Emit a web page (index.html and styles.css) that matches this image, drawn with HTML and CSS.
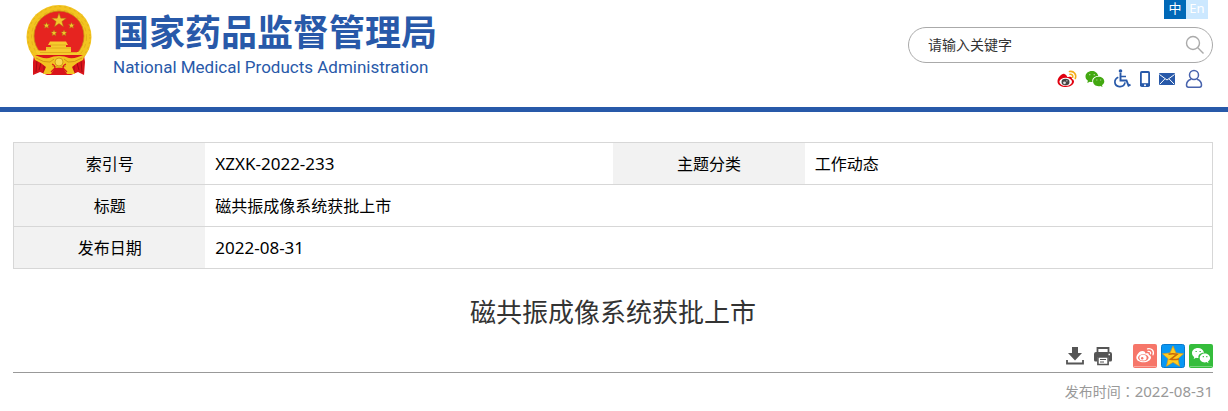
FILE: index.html
```html
<!DOCTYPE html>
<html lang="zh-CN">
<head>
<meta charset="utf-8">
<title>磁共振成像系统获批上市</title>
<link rel="stylesheet" href="styles.css">
</head>
<body>
<header class="header">
  <a class="brand" href="#">
    <svg class="emblem" viewBox="0 0 66 70" aria-hidden="true">
      <ellipse cx="33" cy="32" rx="32.500" ry="32" fill="#f2c420"/>
      <ellipse cx="33" cy="32" rx="31" ry="30.500" fill="none" stroke="#e3ad1a" stroke-width="1" stroke-dasharray="2 3"/>
      <ellipse cx="33" cy="32" rx="27.500" ry="27" fill="none" stroke="#e6b01b" stroke-width="1" stroke-dasharray="4 3"/>
      <circle cx="33" cy="31" r="25" fill="#e62420" stroke="#c98a12" stroke-width=".8"/>
      <path d="M8 50H58L59 57 58 70 52 67 45 70H21L14 67 7 70 7 57Z" fill="#d9141b"/>
      <path d="M11 56 10 67M15 58 13 65M18 60 18 68M55 56 56 67M51 58 53 65M48 60 48 68" stroke="#a40c14" stroke-width="1"/>
      <g fill="#f4c62c" stroke="#a96f12" stroke-width=".5">
        <path d="m33 8 1.800 5.200h5.500l-4.400 3.300 1.600 5.200-4.500-3.100-4.500 3.100 1.600-5.200-4.400-3.300h5.500z"/>
        <path d="m20.500 17.500.9 1.900 2.100.2-1.600 1.400.5 2.200-1.900-1.100-1.900 1.100.5-2.200-1.600-1.400 2.100-.2zM45.500 17.500l.9 1.900 2.100.2-1.600 1.400.5 2.200-1.900-1.100-1.900 1.100.5-2.200-1.600-1.400 2.100-.2zM28 25l.9 1.900 2.100.2-1.600 1.400.5 2.200-1.900-1.100-1.900 1.100.5-2.200-1.600-1.400 2.100-.2zM38 25l.9 1.900 2.100.2-1.600 1.400.5 2.200-1.900-1.100-1.900 1.100.5-2.200-1.600-1.400 2.100-.2z"/>
      </g>
      <path d="M24 36.500H40L42 40H40V42H44V43H24V42H25V40H22ZM20 42H45V47H54L52 50H12L9 45.500H20Z" fill="#f6ca2d"/>
      <path d="M24 40H40M20 43H45M14 47.500H51" stroke="#dda51a" stroke-width=".8"/>
      <path d="M14 51H52L45 54H21Z" fill="#dc171c"/>
      <path d="M7 49Q16 54 23 53Q27 51 33 51Q39 51 43 53Q50 54 59 49L57 55Q50 58 46 62L49 69H41L37 63H29L25 69H17L20 62Q16 58 9 55Z" fill="#f3c220"/>
      <path d="M10 53Q18 58 24 57L28 54M56 53Q48 58 42 57L38 54M26 61Q33 64 40 61" fill="none" stroke="#c98a12" stroke-width=".8"/>
      <path d="M26 59Q29 60 29 63L25 67M40 59Q37 60 37 63L41 67" fill="none" stroke="#d9141b" stroke-width="1.200"/>
      <circle cx="33" cy="57" r="4" fill="#f8d84e" stroke="#c98a12" stroke-width=".8"/>
      <path d="M28 65Q33 61 38 65L40 69H26Z" fill="#d9141b"/>
    </svg>
    <span class="brand-text">
      <span class="brand-name">国家药品监督管理局</span>
      <span class="brand-en">National Medical Products Administration</span>
    </span>
  </a>
  <div class="tools">
    <nav class="langs" aria-label="语言"><a class="lang lang-on" href="#">中</a><a class="lang" href="#">En</a></nav>
    <form class="search">
      <input class="search-input" type="text" placeholder="请输入关键字" aria-label="请输入关键字">
      <button class="search-button" type="button" aria-label="搜索">
        <svg width="20" height="20" viewBox="0 0 20 20" fill="none" stroke="#aaa" stroke-width="1.400"><circle cx="8" cy="8" r="6.500"/><path d="m12.800 12.800 5.700 5.700"/></svg>
      </button>
    </form>
    <nav class="links" aria-label="快捷入口">
      <a href="#" aria-label="微博"><svg width="20" height="18" viewBox="0 0 20 18">
        <path d="M7.500 4C5 3 .8 7.500.5 11c-.3 4 4 6 8.500 6s8-2.500 8-5.400c0-1.600-1-2.400-2.200-2.700.6-1.600-.2-2.900-3.600-1.900C9.800 7.400 10 5 7.500 4Z" fill="#e0000f"/>
        <ellipse cx="8.700" cy="11.800" rx="6.300" ry="4" fill="#fff"/><ellipse cx="8.500" cy="12" rx="4" ry="3.200" fill="#444"/><circle cx="7.500" cy="12.800" r="1.400" fill="#ddd"/><circle cx="9.900" cy="10.800" r=".6" fill="#fff"/>
        <path d="M12.500 1.500C17 .7 19.800 4.500 18.300 8.500M13 4.300c2-.2 3.200 1.200 2.700 3" fill="none" stroke="#f3ad19" stroke-width="1.600" stroke-linecap="round"/></svg></a>
      <a href="#" aria-label="微信"><svg width="20" height="18" viewBox="0 0 20 18"><path d="M7 1C3.200 1 .5 3.400.5 6.500c0 1.800.9 3.200 2.400 4.200L2.300 13l2.500-1.300c.9.200 1.700.3 2.600.2C6.500 8.500 9.500 6 13.300 6 12.700 3 10 1 7 1Z" fill="#43a811"/><path d="M13.600 6.800c-3.200 0-5.500 2-5.500 4.700s2.300 4.700 5.500 4.700c.7 0 1.300-.1 1.900-.3l2 1.100-.5-1.900c1.400-.8 2.300-2.200 2.300-3.600 0-2.700-2.600-4.700-5.700-4.700Z" fill="#43a811"/><path d="M4 4.600h1.400M8.600 4.600H10M11.200 10h1.200M15 10h1.200" stroke="#a5d68c" stroke-width="1.200"/></svg></a>
      <a href="#" aria-label="无障碍"><svg width="18" height="19" viewBox="0 0 18 19" fill="none" stroke="#2859a9" stroke-width="1.700"><circle cx="7.500" cy="2" r="1.800" fill="#2859a9" stroke="none"/><path d="M7.500 4v7.500h6l2 5.200 2-1" stroke-width="1.900"/><path d="M7.500 7.500h5.500M5.300 8.200C.5 10.200.7 17 6.300 17.600c3 .3 5.200-1.500 5.800-4.200"/></svg></a>
      <a href="#" aria-label="移动版"><svg width="12" height="18" viewBox="0 0 12 18"><rect x="1" y="1" width="10" height="16" rx="1.800" fill="#2859a9"/><path d="M2.800 3h6.400v10.200H2.800Z" fill="#fff"/><circle cx="6" cy="15.200" r="1" fill="#fff"/></svg></a>
      <a href="#" aria-label="邮箱"><svg width="16" height="12" viewBox="0 0 16 12"><rect width="16" height="12" rx="1" fill="#2859a9"/><path d="m.5 1.500 7.500 5.500 7.500-5.500M1 11l4.800-5M15 11l-4.800-5" fill="none" stroke="#fff" stroke-width="1"/></svg></a>
      <a class="user-link" href="#" aria-label="用户"><svg width="16" height="18" viewBox="0 0 16 18" fill="none" stroke="#4863ad" stroke-width="1.500"><circle cx="8" cy="5" r="4.500"/><path d="M5 9.200C2 10.300.5 12.500.5 15c0 1.600.8 2.200 2 2.200h11c1.200 0 2-.6 2-2.200 0-2.500-1.500-4.700-4.500-5.800"/></svg></a>
    </nav>
  </div>
</header>
<main class="content">
  <table class="info">
    <tr><th scope="row">索引号</th><td class="latin">XZXK-2022-233</td><th scope="row">主题分类</th><td>工作动态</td></tr>
    <tr><th scope="row">标题</th><td colspan="3">磁共振成像系统获批上市</td></tr>
    <tr><th scope="row">发布日期</th><td class="latin" colspan="3">2022-08-31</td></tr>
  </table>
  <h1 class="title">磁共振成像系统获批上市</h1>
  <div class="actions">
    <button class="action" type="button" aria-label="下载"><svg width="20" height="20" viewBox="0 0 20 20"><path d="M7 1h6v6h4l-7 7.500L3 7h4Z" fill="#555"/><path d="M2 14v3.500h16V14" fill="none" stroke="#555" stroke-width="1.800"/></svg></button>
    <button class="action" type="button" aria-label="打印"><svg width="20" height="20" viewBox="0 0 20 20"><path d="M4.500 6V2h11v4" fill="none" stroke="#555" stroke-width="1.800"/><path d="M3 6h14q2 0 2 2v6q0 1.500-1.500 1.500H16V11H4v4.500H2.500Q1 15.500 1 14V8q0-2 2-2Z" fill="#555"/><path d="M4.900 11h10.200v7.500H4.900Z" fill="#fff" stroke="#555" stroke-width="1.600"/><path d="M7 13.500h6M7 16h4" stroke="#555" stroke-width="1.200"/><path d="M15.500 8.500h1.500" stroke="#fff" stroke-width="1.300"/></svg></button>
    <span class="shares">
      <a href="#" aria-label="分享到微博"><svg width="24" height="24" viewBox="0 0 24 24"><rect width="24" height="24" rx="2" fill="#f67669"/><path d="M1 22.500h22" stroke="#faa69d"/><path d="M9.500 7C7 6.500 3.500 10.500 3.300 13.500c-.1 3.200 3.500 4.800 7.200 4.800 4 0 7.500-2.200 7.500-4.800 0-1.500-1.100-2.200-2.200-2.500.5-1.800-1-2.300-3.500-1.500C12.500 8 11.500 7.200 9.500 7Z" fill="#fff"/><ellipse cx="10.300" cy="13.700" rx="5.300" ry="3.500" fill="#f67669"/><ellipse cx="10" cy="13.700" rx="3.600" ry="2.900" fill="#fff"/><circle cx="9.200" cy="14.300" r="1.200" fill="#f67669"/><path d="M14.500 4.800c4-.8 7 2 5.500 6M15 7.300c2-.2 3 1 2.500 2.500" fill="none" stroke="#fff" stroke-width="1.300" stroke-linecap="round"/></svg></a>
      <a href="#" aria-label="分享到QQ空间"><svg width="24" height="24" viewBox="0 0 24 24"><rect x=".5" y=".5" width="23" height="23" rx="2" fill="#0997f3" stroke="#0878cc"/><path d="m12 2 3 7 7.500.8-5.700 5 1.700 7.400L12 18.300l-6.500 3.900 1.700-7.400-5.700-5L9 9Z" fill="#ffcd20" stroke="#e19a12" stroke-width=".7"/><path d="M7.500 10.300c3-.7 5.500-.7 8.500 0l-6.500 5c3 .5 5 .4 8.500-.3" fill="none" stroke="#c76708" stroke-width="1.500"/></svg></a>
      <a href="#" aria-label="分享到微信"><svg width="24" height="24" viewBox="0 0 24 24"><rect width="24" height="24" rx="2" fill="#35bd3c"/><path d="M1 22.500h22" stroke="#79d47e"/><path d="M9 4C5.500 4 3 6.200 3 9c0 1.600.8 3 2.200 3.900L4.700 15 7 13.800c.8.200 1.600.3 2.500.2C8.700 11 11.500 8.500 15 8.700 14.400 6 12 4 9 4Z" fill="#fff"/><path d="M15.800 9.600c-2.900 0-5.100 2-5.100 4.400s2.200 4.400 5.100 4.400c.6 0 1.200-.1 1.800-.3l1.900 1.100-.5-1.800c1.300-.8 2.100-2 2.100-3.400 0-2.500-2.500-4.400-5.300-4.400Z" fill="#fff"/><path d="M6.500 7.500h1.300M10.500 7.500h1.300M13.700 12.600h1.200M17.200 12.600h1.200" stroke="#35bd3c" stroke-width="1.200"/></svg></a>
    </span>
  </div>
  <p class="published">发布时间<span class="colon" lang="zh-TW">：</span><time class="published-date" datetime="2022-08-31">2022-08-31</time></p>
</main>
</body>
</html>
```
FILE: styles.css
```css
* { box-sizing: border-box; }
body {
  margin: 0;
  background: #fff;
  color: #000;
  font: 16px/24px "Noto Sans", "Noto Sans CJK SC", sans-serif;
}
a { color: inherit; text-decoration: none; }
svg { display: block; overflow: visible; }
button { border: 0; padding: 0; background: none; cursor: pointer; }

.header {
  display: flex;
  justify-content: space-between;
  align-items: flex-start;
  height: 112px;
  padding: 0 15px 0 26px;
  border-bottom: 5px solid #2859a9;
}
.brand { display: flex; gap: 21px; padding-top: 5px; color: #2859a9; }
.emblem { width: 66px; height: 70px; }
.brand-text { display: flex; flex-direction: column; padding-top: 5px; white-space: nowrap; }
.brand-name { font: bold 36px/40px "Noto Sans CJK SC", sans-serif; }
.brand-en { font: 17px/20px Roboto, sans-serif; padding-top: 7px; }

.tools { display: flex; flex-direction: column; width: 305px; }
.langs { display: flex; justify-content: flex-end; padding-right: 5px; }
.lang {
  width: 22px;
  height: 19px;
  background: #cce8ff;
  color: #fff;
  font-size: 13px;
  line-height: 16px;
  text-align: center;
}
.lang-on { background: #0068b7; }
.search {
  display: flex;
  align-items: center;
  height: 36px;
  margin-top: 8px;
  padding: 0 7px 0 19px;
  border: 1px solid #aaa;
  border-radius: 18px;
}
.search-input {
  flex: 1;
  min-width: 0;
  padding: 0 0 2px;
  border: 0;
  outline: 0;
  background: none;
  font: 14px/20px "Noto Sans CJK SC", sans-serif;
}
.search-input::placeholder { color: #333; opacity: 1; }
.links {
  display: flex;
  align-items: center;
  justify-content: flex-end;
  gap: 8px;
  margin-top: 6px;
  padding-right: 11px;
}
.user-link { margin-left: 3px; }

.content { padding: 30px 15px 0 13px; }
.info { width: 100%; border-collapse: collapse; table-layout: fixed; border: 1px solid #d7d7d7; }
.info tr { border-bottom: 1px solid #d7d7d7; }
.info th, .info td { height: 42px; padding: 0 10px; }
.info th { width: 16%; background: #f2f2f2; font-weight: normal; }
.info td { width: 34%; }
.info .latin { font-size: 17px; }
.title {
  margin: 25px 0 0;
  color: #333;
  font-size: 26px;
  font-weight: normal;
  line-height: 36px;
  text-align: center;
}
.actions {
  display: flex;
  justify-content: flex-end;
  align-items: center;
  gap: 8px;
  margin-top: 14px;
  padding-bottom: 4px;
  border-bottom: 1px solid #999;
}
.shares { display: flex; gap: 4px; margin-left: 12px; }
.published { margin: 7px 0 0; color: #999; font-size: 14px; line-height: 22px; text-align: right; }
.colon { font-family: "Noto Sans CJK TC", sans-serif; }
.published-date { font-size: 15px; }
```
